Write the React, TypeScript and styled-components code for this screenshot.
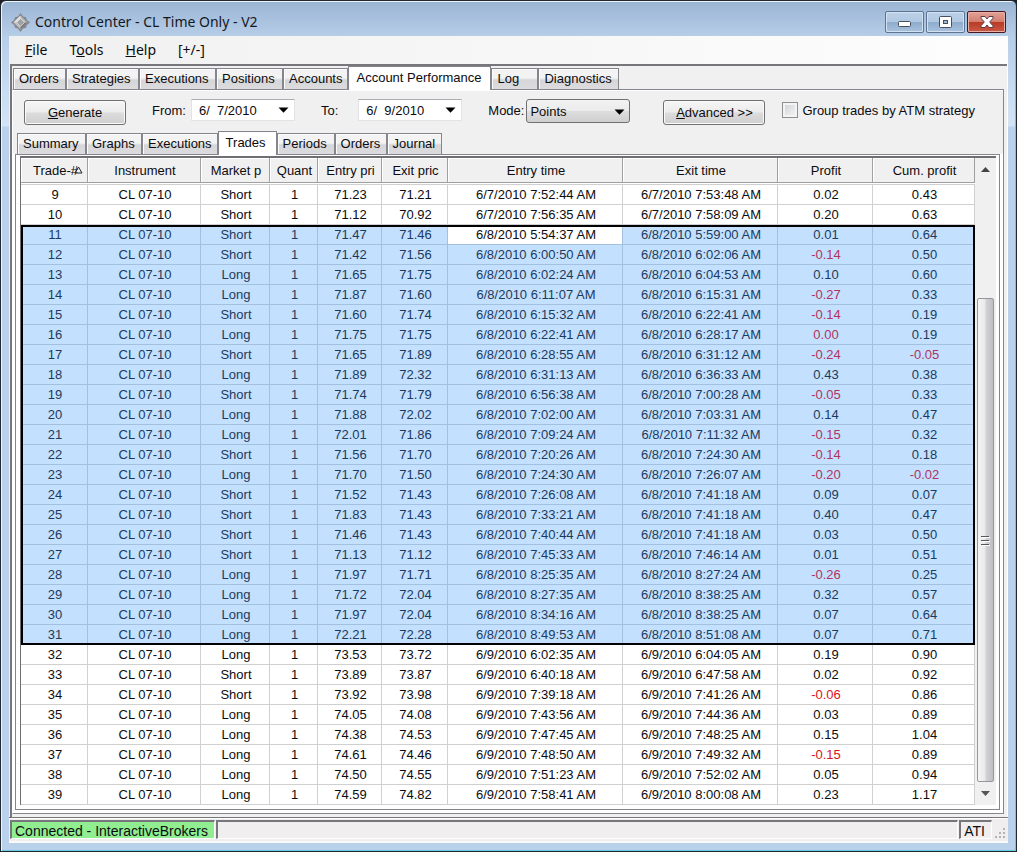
import React from "react";
import styled, { createGlobalStyle, css } from "styled-components";

const UI = `"Liberation Sans", Arial, sans-serif`;
const SEGOE = `"Noto Sans", "Open Sans", sans-serif`;
const FACE = "#f0f0f0";
const LINE = "#85858d";

const GlobalStyle = createGlobalStyle`
  *, *::before, *::after { box-sizing: border-box; }
  body { margin: 0; background: #1c2026; font-family: ${UI}; font-size: 13px; color: #0c0c10; }
  button, input, select { font: inherit; color: inherit; margin: 0; }
`;

const Frame = styled.div`
  border: 1px solid #22282f;
  border-radius: 6px 6px 0 0;
  background: linear-gradient(to bottom, #9ab4d3 0, #b7cee8 36px, #c9dcf1 90px, #d3e3f5 125px, #b9d1ea 126px);
  box-shadow: inset 1px 1px 0 #eef5fc, inset -1px -1px 0 #62cde0;
  padding: 0 8px 8px;
`;

const TitleBar = styled.header`
  display: flex;
  align-items: center;
  height: 35px;
  padding: 7px 2px 0 2px;
`;

const Title = styled.h1`
  flex: 1;
  margin: 0 0 0 5px;
  font: 400 14px/20px ${SEGOE};
  padding-bottom: 1px;
  color: #14181f;
`;

const Captions = styled.div`
  display: flex;
  gap: 2px;
`;

const CaptionButton = styled.button<{ $close?: boolean }>`
  width: 39px;
  height: 22px;
  padding: 0;
  display: grid;
  place-items: center;
  border-radius: 2px;
  border: 1px solid ${(p) => (p.$close ? "#4a1620" : "#5b7593")};
  background: ${(p) =>
    p.$close
      ? "linear-gradient(#e3a196 0, #d27f72 48%, #b93a25 50%, #c95a45 100%)"
      : "linear-gradient(#bed2e8 0, #b0c8e2 48%, #8eabcb 50%, #a9c3de 100%)"};
  box-shadow: inset 0 0 0 1px ${(p) => (p.$close ? "#e8b0a6" : "#d2e2f2")};
`;

const Client = styled.div`
  background: ${FACE};
`;

const MenuBar = styled.nav`
  display: flex;
  gap: 22px;
  height: 28px;
  padding: 0 16px;
  background: linear-gradient(to right, #f0f0f0, #fdfdfd);
`;

const MenuItem = styled.button`
  border: 0;
  padding: 0;
  background: none;
  font: 400 14px/28px ${SEGOE};
`;

const Workspace = styled.div`
  margin: 0 1px;
  border: solid #77777b;
  border-width: 2px 0 0 2px;
  box-shadow: 1px 0 0 #fff;
  padding: 0 3px 3px 0;
`;

const TabStrip = styled.div<{ $inset: number }>`
  display: flex;
  align-items: flex-end;
  height: 23px;
  padding-left: ${(p) => p.$inset}px;
`;

const Tab = styled.button<{ $width: number; $selected?: boolean }>`
  flex: 0 0 ${(p) => p.$width}px;
  height: 21px;
  padding: 0 5px;
  text-align: left;
  white-space: nowrap;
  border: solid ${LINE};
  border-width: 1px 1px 0 1px;
  background: linear-gradient(#f3f3f3 45%, #d6d6d8 55%, #dcdcde);
  line-height: 20px;
  box-shadow: inset 1px 1px 0 #fbfbfb;
  ${(p) =>
    p.$selected &&
    css`
      height: 24px;
      margin-bottom: -1px;
      padding: 0 7px 2px;
      background: #fff;
      z-index: 1;
    `}
`;

const OuterPanel = styled.section`
  border: 1px solid ${LINE};
  border-left-color: #fff;
  background: ${FACE};
  box-shadow: inset 0 1px 0 #fff;
`;

const Toolbar = styled.div`
  display: flex;
  align-items: flex-start;
  height: 41px;
  padding: 9px 12px 0 11px;
`;

const PushButton = styled.button<{ $gap?: number }>`
  flex: none;
  width: 102px;
  height: 25px;
  margin-top: 1px;
  margin-left: ${(p) => p.$gap ?? 0}px;
  padding: 0;
  border: 1px solid #707074;
  border-radius: 3px;
  background: linear-gradient(#f5f5f5 0, #ececec 48%, #dcdcdc 52%, #cfcfd0 100%);
  box-shadow: inset 0 0 0 1px #fafafa;
`;

const FieldLabel = styled.label<{ $gap: number }>`
  margin-left: ${(p) => p.$gap}px;
  line-height: 24px;
`;

const DateField = styled.span<{ $gap: number }>`
  display: flex;
  align-items: center;
  flex: none;
  width: 104px;
  height: 22px;
  margin-left: ${(p) => p.$gap}px;
  padding-right: 5px;
  border: 1px solid #e2e3e6;
  border-top-color: #abadb3;
  background: #fff;
`;

const DateInput = styled.input`
  flex: 1;
  min-width: 0;
  border: 0;
  padding: 0 0 0 7px;
  background: none;
  white-space: pre;
`;

const DropButton = styled.button`
  display: grid;
  border: 0;
  padding: 0;
  background: none;
`;

const ComboBox = styled.span`
  position: relative;
  display: block;
  margin-left: 2px;
  svg {
    position: absolute;
    right: 5px;
    top: 10px;
    pointer-events: none;
  }
`;

const Select = styled.select`
  appearance: none;
  display: block;
  width: 104px;
  height: 24px;
  padding: 0 3px;
  border: 1px solid #707074;
  border-radius: 3px;
  background: linear-gradient(#f2f2f2 0, #ebebeb 48%, #dddddd 52%, #cfcfcf 100%);
`;

const CheckLabel = styled.label`
  display: flex;
  align-items: center;
  gap: 4px;
  height: 22px;
  margin-left: 17px;
  white-space: nowrap;
`;

const CheckBox = styled.input`
  appearance: none;
  width: 16px;
  height: 16px;
  border: 1px solid #8e8f8f;
  background: linear-gradient(135deg, #cdd1d6, #f6f6f6);
  box-shadow: inset 0 0 0 2px #f4f4f4;
`;

const InnerPanel = styled.section`
  margin: 0 3px 3px 2px;
  border: 1px solid ${LINE};
  background: #fff;
  padding: 1px 3px 4px 4px;
`;

const PanelWell = styled.div`
  display: flow-root;
  background: linear-gradient(${FACE} 23px, #fff 23px);
`;

const GridBox = styled.div`
  display: flex;
  border: solid #6f6f73;
  border-width: 2px 0 0 1px;
  background: #fff;
`;

const Grid = styled.table`
  flex: 1;
  min-width: 0;
  width: 100%;
  table-layout: fixed;
  border-collapse: separate;
  border-spacing: 0;
`;

const HeadCell = styled.th`
  height: 27px;
  padding: 0 0 1px;
  font-weight: 400;
  border-bottom: 1px solid #d0d0d0;
`;

const HeadFace = styled.span<{ $sorted?: boolean }>`
  display: flex;
  justify-content: ${(p) => (p.$sorted ? "flex-end" : "center")};
  align-items: center;
  height: 25px;
  padding: 0 4px 0 6px;
  overflow: hidden;
  white-space: nowrap;
  background: ${FACE};
  border: solid #a0a0a0;
  border-width: 0 1px 1px 0;
  box-shadow: inset 1px 1px 0 #fff;
  svg {
    margin-left: -4px;
  }
`;

const Cell = styled.td<{ $negative?: boolean; $focused?: boolean }>`
  height: 20px;
  padding: 0 0 0 2px;
  line-height: 19px;
  text-align: center;
  white-space: nowrap;
  overflow: hidden;
  border: solid #d0d0d0;
  border-width: 0 1px 1px 0;
  color: ${(p) => (p.$negative ? "#d8131b" : "inherit")};
`;

const Group = styled.tbody<{ $selected?: boolean }>`
  ${(p) =>
    p.$selected &&
    css`
      position: relative;
      background: #c3e0ff;
      color: #1b3a5e;
      &::after {
        content: "";
        position: absolute;
        inset: 0;
        border: 2px solid #000;
        pointer-events: none;
      }
      ${Cell} {
        border-color: #a3c0df;
      }
    `}
`;

const SelectedCell = styled(Cell)`
  color: ${(p) => (p.$focused ? "#0c0c10" : p.$negative ? "#b03360" : "inherit")};
  background: ${(p) => (p.$focused ? "#fff" : "none")};
`;

const ScrollBar = styled.div`
  display: flex;
  flex-direction: column;
  flex: 0 0 21px;
  padding: 0 2px;
  background: ${FACE};
`;

const ScrollArrow = styled.button`
  display: grid;
  place-items: center;
  height: 23px;
  border: 0;
  padding: 0;
  background: none;
`;

const ScrollTrack = styled.div`
  flex: 1;
  display: grid;
  grid-template-rows: 39fr 161fr;
`;

const ScrollThumb = styled.div`
  grid-row: 2;
  display: grid;
  place-items: center;
  border: 1px solid #97979b;
  border-radius: 2px;
  background: linear-gradient(to right, #f5f5f5 0, #e9e9eb 45%, #d2d2d5 55%, #bfbfc3 100%);
`;

const StatusBar = styled.footer`
  display: flex;
  gap: 1px;
  height: 26px;
  padding: 2px 0 4px 1px;
  border-top: 1px solid #77777b;
  background: #f0eeee;
  box-shadow: inset 0 1px 0 #fff, inset 0 -2px 0 #fafafa;
  font-size: 14px;
  line-height: 18px;
`;

const StatusPane = styled.div<{ $grow?: boolean; $on?: boolean }>`
  flex: ${(p) => (p.$grow ? "1" : "0 0 auto")};
  padding: 0 6px 0 3px;
  border: 1px solid;
  border-color: #77777b #fff #fff #77777b;
  border-width: 2px 1px 1px 2px;
  background: ${(p) => (p.$on ? "#90ee90" : "transparent")};
`;

const Grip = styled.div`
  display: flex;
  align-items: flex-end;
  padding: 0 2px 0 1px;
`;

const Down = () => (
  <svg width="11" height="6" viewBox="0 0 11 6" aria-hidden="true">
    <path d="M0.5 0.5h10L5.5 5.7z" fill="#000" />
  </svg>
);

const Logo = () => (
  <svg width="19" height="19" viewBox="0 0 19 19" aria-hidden="true">
    <path d="M9.5 0l2.6 3.4L15 4.2l.8 2.7L19 9.5l-3.200 2.600-.8 2.700-2.900.8L9.500 19l-2.600-3.400-2.900-.8-.8-2.700L0 9.500l3.200-2.600.8-2.700 2.900-.8z" fill="#85868a" />
    <path d="M9.500 2.500l7 7-7 7-7-7z" fill="#b9babd" />
    <path d="M9.500 2.500v4l-3 3h-4z" fill="#e2e3e5" />
    <path d="M9.500 16.500v-4l3-3h4z" fill="#77787c" />
    <path d="M9.500 5.500l4 4-4 4-4-4z" fill="#a0a1a5" stroke="#dfe0e2" strokeWidth=".8" />
  </svg>
);

const MinimizeIcon = () => (
  <svg width="14" height="14" viewBox="0 0 14 14" aria-hidden="true">
    <rect x=".5" y="6.500" width="12" height="5" rx="1" fill="#fff" stroke="#45505e" />
  </svg>
);

const MaximizeIcon = () => (
  <svg width="13" height="12" viewBox="0 0 13 12" aria-hidden="true">
    <rect x=".5" y=".5" width="12" height="11" rx="1" fill="#fff" stroke="#45505e" />
    <rect x="4.500" y="4.500" width="4" height="3" fill="#9fb8d4" stroke="#45505e" />
  </svg>
);

const CloseIcon = () => (
  <svg width="14" height="12" viewBox="0 0 14 12" aria-hidden="true">
    <path d="M1 .5h4L7 3 9 .5h4v1.700L9.700 6l3.300 3.800v1.700H9L7 9l-2 2.500H1V9.800L4.300 6 1 2.200z" fill="#fff" stroke="#5a3b44" strokeLinejoin="round" />
  </svg>
);

const mainTabs: [string, number][] = [
  ["Orders", 53],
  ["Strategies", 73],
  ["Executions", 77],
  ["Positions", 67],
  ["Accounts", 65],
  ["Account Performance", 143],
  ["Log", 47],
  ["Diagnostics", 81],
];

const reportTabs: [string, number][] = [
  ["Summary", 69],
  ["Graphs", 56],
  ["Executions", 75],
  ["Trades", 59],
  ["Periods", 58],
  ["Orders", 52],
  ["Journal", 55],
];

const columns: [string, number][] = [
  ["Trade-#", 67],
  ["Instrument", 113],
  ["Market p", 69],
  ["Quant", 48],
  ["Entry pri", 64],
  ["Exit pric", 66],
  ["Entry time", 175],
  ["Exit time", 155],
  ["Profit", 95],
  ["Cum. profit", 102],
];

/* side | entry price | exit price | day | entry time | exit time | profit | cumulative */
const log = `Short|71.23|71.21|7|7:52:44|7:53:48|0.02|0.43
Short|71.12|70.92|7|7:56:35|7:58:09|0.20|0.63
Short|71.47|71.46|8|5:54:37|5:59:00|0.01|0.64
Short|71.42|71.56|8|6:00:50|6:02:06|-0.14|0.50
Long|71.65|71.75|8|6:02:24|6:04:53|0.10|0.60
Long|71.87|71.60|8|6:11:07|6:15:31|-0.27|0.33
Short|71.60|71.74|8|6:15:32|6:22:41|-0.14|0.19
Long|71.75|71.75|8|6:22:41|6:28:17|0.00|0.19
Short|71.65|71.89|8|6:28:55|6:31:12|-0.24|-0.05
Long|71.89|72.32|8|6:31:13|6:36:33|0.43|0.38
Short|71.74|71.79|8|6:56:38|7:00:28|-0.05|0.33
Long|71.88|72.02|8|7:02:00|7:03:31|0.14|0.47
Long|72.01|71.86|8|7:09:24|7:11:32|-0.15|0.32
Short|71.56|71.70|8|7:20:26|7:24:30|-0.14|0.18
Long|71.70|71.50|8|7:24:30|7:26:07|-0.20|-0.02
Short|71.52|71.43|8|7:26:08|7:41:18|0.09|0.07
Short|71.83|71.43|8|7:33:21|7:41:18|0.40|0.47
Short|71.46|71.43|8|7:40:44|7:41:18|0.03|0.50
Short|71.13|71.12|8|7:45:33|7:46:14|0.01|0.51
Long|71.97|71.71|8|8:25:35|8:27:24|-0.26|0.25
Long|71.72|72.04|8|8:27:35|8:38:25|0.32|0.57
Long|71.97|72.04|8|8:34:16|8:38:25|0.07|0.64
Long|72.21|72.28|8|8:49:53|8:51:08|0.07|0.71
Long|73.53|73.72|9|6:02:35|6:04:05|0.19|0.90
Short|73.89|73.87|9|6:40:18|6:47:58|0.02|0.92
Short|73.92|73.98|9|7:39:18|7:41:26|-0.06|0.86
Long|74.05|74.08|9|7:43:56|7:44:36|0.03|0.89
Long|74.38|74.53|9|7:47:45|7:48:25|0.15|1.04
Long|74.61|74.46|9|7:48:50|7:49:32|-0.15|0.89
Long|74.50|74.55|9|7:51:23|7:52:02|0.05|0.94
Long|74.59|74.82|9|7:58:41|8:00:08|0.23|1.17`;

const trades = log.split("\n").map((line, i) => {
  const [side, entry, exit, day, start, end, profit, total] = line.split("|");
  const stamp = (t: string) => `6/${day}/2010 ${t} AM`;
  return [String(i + 9), "CL 07-10", side, "1", entry, exit, stamp(start), stamp(end), profit, total];
});

const isLoss = (value: string, col: number) => col >= 8 && (value.startsWith("-") || value === "0.00");

function Rows({ rows, selected }: { rows: string[][]; selected?: boolean }) {
  const Td = selected ? SelectedCell : Cell;
  return (
    <Group $selected={selected}>
      {rows.map((row, r) => (
        <tr key={row[0]}>
          {row.map((value, c) => (
            <Td key={c} $negative={isLoss(value, c)} $focused={selected && r === 0 && c === 6}>
              {value}
            </Td>
          ))}
        </tr>
      ))}
    </Group>
  );
}

function Tabs({ items, selected, inset, label }: { items: [string, number][]; selected: string; inset: number; label: string }) {
  return (
    <TabStrip $inset={inset} role="tablist" aria-label={label}>
      {items.map(([name, width]) => (
        <Tab key={name} role="tab" aria-selected={name === selected} $width={width} $selected={name === selected}>
          {name}
        </Tab>
      ))}
    </TabStrip>
  );
}

function DatePicker({ id, label, value, gap }: { id: string; label: string; value: string; gap: number }) {
  return (
    <>
      <FieldLabel htmlFor={id} $gap={26}>{label}</FieldLabel>
      <DateField $gap={gap}>
        <DateInput id={id} defaultValue={value} />
        <DropButton aria-label="Open calendar"><Down /></DropButton>
      </DateField>
    </>
  );
}

export default function App() {
  return (
    <>
      <GlobalStyle />
      <Frame>
        <TitleBar>
          <Logo />
          <Title>Control Center - CL Time Only - V2</Title>
          <Captions>
            <CaptionButton aria-label="Minimize"><MinimizeIcon /></CaptionButton>
            <CaptionButton aria-label="Maximize"><MaximizeIcon /></CaptionButton>
            <CaptionButton aria-label="Close" $close><CloseIcon /></CaptionButton>
          </Captions>
        </TitleBar>
        <Client>
          <MenuBar>
            <MenuItem><u>F</u>ile</MenuItem>
            <MenuItem>T<u>o</u>ols</MenuItem>
            <MenuItem><u>H</u>elp</MenuItem>
            <MenuItem>[+/-]</MenuItem>
          </MenuBar>
          <Workspace>
            <Tabs items={mainTabs} selected="Account Performance" inset={1} label="Control center" />
            <OuterPanel>
              <Toolbar>
                <PushButton><u>G</u>enerate</PushButton>
                <DatePicker id="from" label="From:" value="6/  7/2010" gap={5} />
                <DatePicker id="to" label="To:" value="6/  9/2010" gap={20} />
                <FieldLabel htmlFor="mode" $gap={26}>Mode:</FieldLabel>
                <ComboBox>
                  <Select id="mode" defaultValue="Points">
                    <option>Points</option>
                  </Select>
                  <Down />
                </ComboBox>
                <PushButton $gap={33}><u>A</u>dvanced &gt;&gt;</PushButton>
                <CheckLabel>
                  <CheckBox type="checkbox" />
                  Group trades by ATM strategy
                </CheckLabel>
              </Toolbar>
              <PanelWell>
                <Tabs items={reportTabs} selected="Trades" inset={4} label="Reports" />
                <InnerPanel>
                  <GridBox>
                    <Grid>
                      <colgroup>
                        {columns.map(([name, width]) => <col key={name} width={width} />)}
                      </colgroup>
                      <thead>
                        <tr>
                          {columns.map(([name], i) => (
                            <HeadCell key={name} scope="col">
                              <HeadFace $sorted={i === 0}>
                                {name}
                                {i === 0 && (
                                  <svg width="9" height="8" viewBox="0 0 9 8" aria-label="sorted ascending">
                                    <path d="M4.500 1L8 7H1z" fill="none" stroke="#222" />
                                  </svg>
                                )}
                              </HeadFace>
                            </HeadCell>
                          ))}
                        </tr>
                      </thead>
                      <Rows rows={trades.slice(0, 2)} />
                      <Rows rows={trades.slice(2, 23)} selected />
                      <Rows rows={trades.slice(23)} />
                    </Grid>
                    <ScrollBar>
                      <ScrollArrow aria-label="Scroll up">
                        <svg width="9" height="5" viewBox="0 0 9 5" aria-hidden="true"><path d="M0 5L4.500 0 9 5z" fill="#444" /></svg>
                      </ScrollArrow>
                      <ScrollTrack>
                        <ScrollThumb>
                          <svg width="9" height="11" viewBox="0 0 9 11" aria-hidden="true">
                            <path d="M0 1.500h8M0 5.500h8M0 9.500h8" stroke="#55555a" />
                            <path d="M1 2.500h8M1 6.500h8M1 10.500h8" stroke="#fff" />
                          </svg>
                        </ScrollThumb>
                      </ScrollTrack>
                      <ScrollArrow aria-label="Scroll down">
                        <svg width="9" height="5" viewBox="0 0 9 5" aria-hidden="true"><path d="M0 0h9L4.500 5z" fill="#555" /></svg>
                      </ScrollArrow>
                    </ScrollBar>
                  </GridBox>
                </InnerPanel>
              </PanelWell>
            </OuterPanel>
          </Workspace>
          <StatusBar>
            <StatusPane $on>Connected - InteractiveBrokers</StatusPane>
            <StatusPane $grow />
            <StatusPane>ATI</StatusPane>
            <Grip>
              <svg width="12" height="12" viewBox="0 0 12 12" aria-hidden="true">
                <path d="M9 1h2v2H9zM5 5h2v2H5zM9 5h2v2H9zM1 9h2v2H1zM5 9h2v2H5zM9 9h2v2H9z" fill="#b5b3b3" />
              </svg>
            </Grip>
          </StatusBar>
        </Client>
      </Frame>
    </>
  );
}
